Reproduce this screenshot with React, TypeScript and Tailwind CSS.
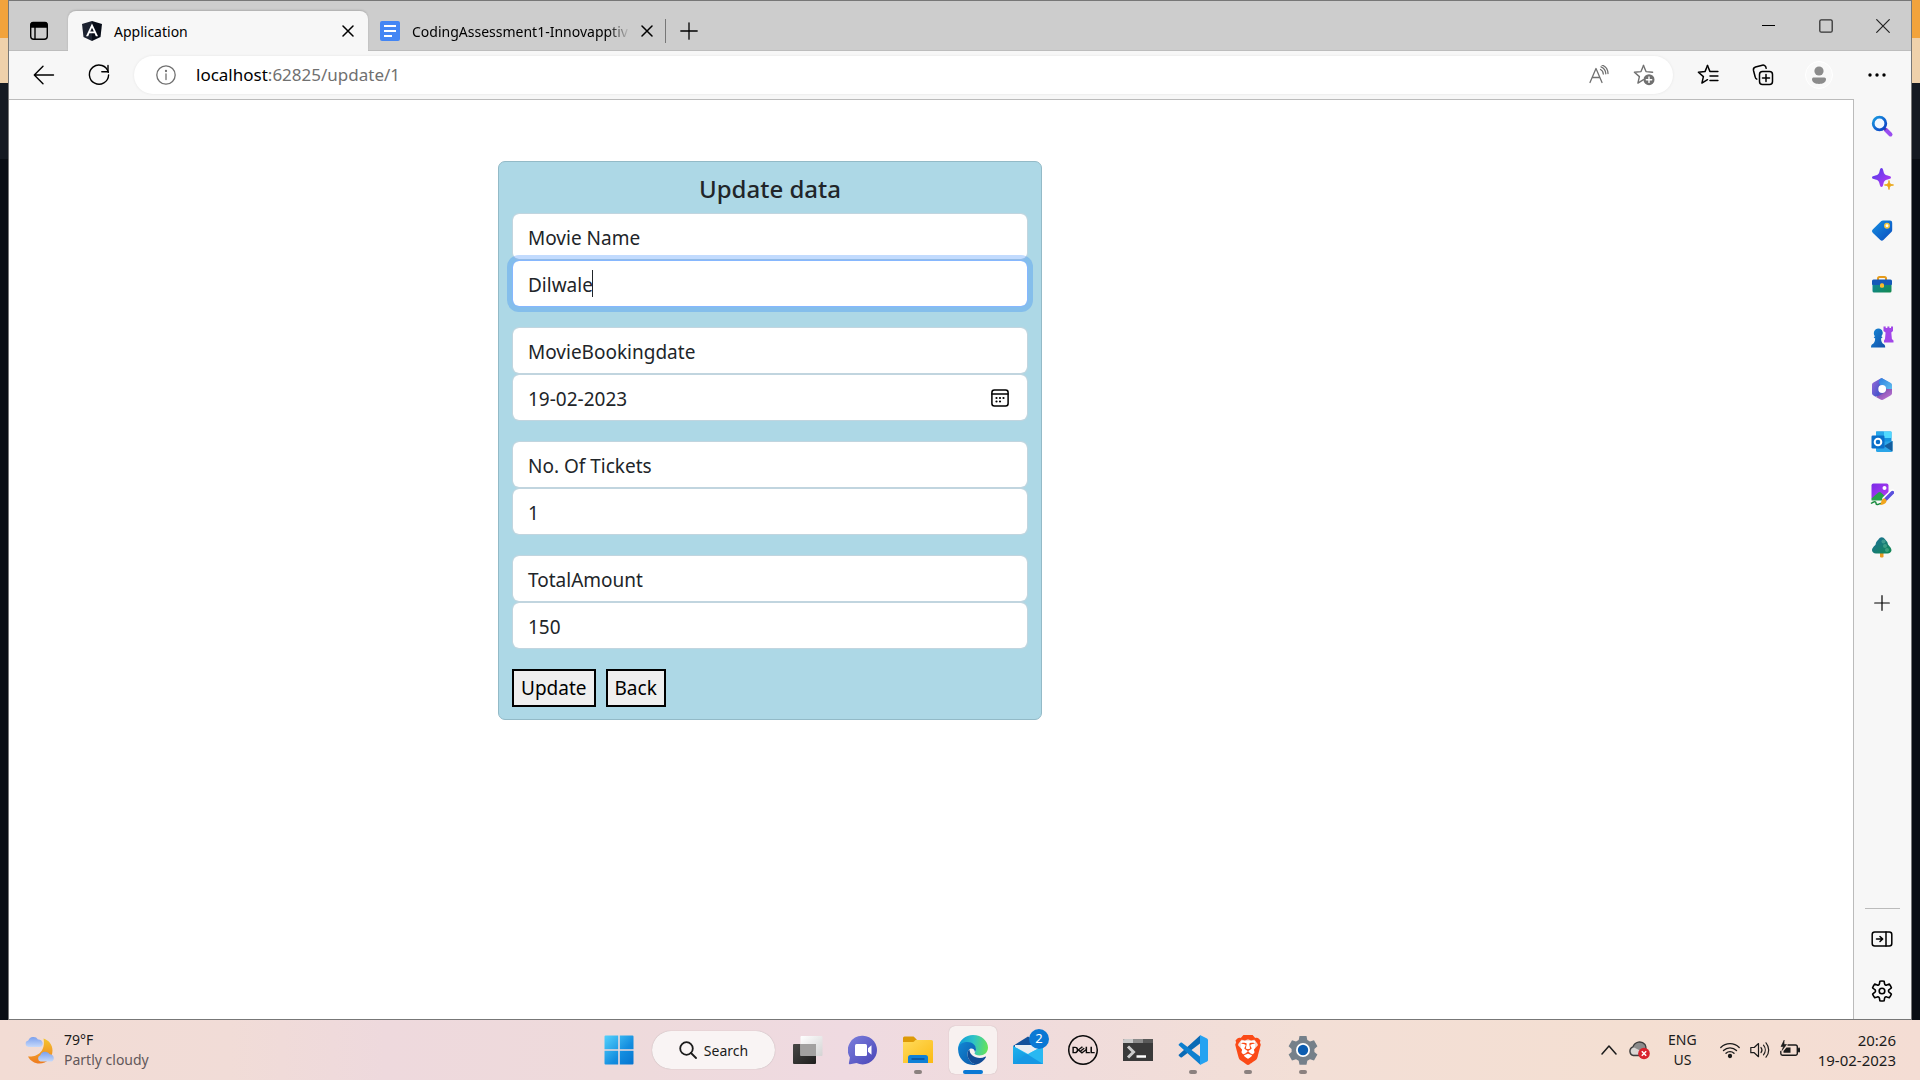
import type { ReactNode } from 'react';
import { SiDell, SiBrave } from 'react-icons/si';

/* ---------- Browser chrome icons ---------- */

const line = { fill: 'none', stroke: 'currentColor', strokeLinecap: 'round', strokeLinejoin: 'round' } as const;

const TabActionsIcon = () => (
  <svg viewBox="0 0 20 20" className="size-5" {...line} strokeWidth="1.4">
    <rect x="1.7" y="1.7" width="16.6" height="16.6" rx="3" />
    <path d="M2 3.5a2 2 0 0 1 2-2h12a2 2 0 0 1 2 2V6H2z" fill="currentColor" />
    <path d="M6 6v12" />
  </svg>
);

const AngularIcon = () => (
  <svg viewBox="0 0 20 20" className="size-5">
    <path d="M10 0 0 3l1.5 13L10 20z" fill="#1c2230" />
    <path d="m10 0 10 3-1.5 13L10 20z" fill="#070c17" />
    <path d="M10 2.5 4 15.2h2.2l1.2-2.9h5.2l1.2 2.9H16zm0 4.2 1.8 3.9H8.2z" fill="#fff" />
  </svg>
);

const DocsIcon = () => (
  <svg viewBox="0 0 20 20" className="size-5">
    <rect width="20" height="20" rx="2" fill="#4486f4" />
    <path d="M4 5h12M4 10h12M4 15h8" stroke="#fff" strokeWidth="2" />
  </svg>
);

const CloseIcon = () => (
  <svg viewBox="0 0 12 12" className="size-3" {...line} strokeWidth="1.5">
    <path d="m1 1 10 10M11 1 1 11" />
  </svg>
);

const PlusIcon = () => (
  <svg viewBox="0 0 18 18" className="size-[18px]" {...line} strokeWidth="1.3">
    <path d="M9 .8v16.4M.8 9h16.4" />
  </svg>
);

const BackIcon = () => (
  <svg viewBox="0 0 22 22" className="size-[22px]" {...line} strokeWidth="1.4">
    <path d="M20.5 11h-19M10 2.2 1.3 11l8.700 8.800" />
  </svg>
);

const RefreshIcon = () => (
  <svg viewBox="0 0 22 22" className="size-[22px]" {...line} strokeWidth="1.4">
    <path d="M20.3 8.200A9.600 9.600 0 1 0 20.600 11" />
    <path d="M20 1.500v6.300h-6.200" />
  </svg>
);

const InfoIcon = () => (
  <svg viewBox="0 0 20 20" className="size-5" {...line} strokeWidth="1.3">
    <circle cx="10" cy="10" r="9.200" />
    <path d="M10 9v5.500" />
    <circle cx="10" cy="6" r=".5" fill="currentColor" />
  </svg>
);

const ReadAloudIcon = () => (
  <svg viewBox="0 0 20 20" className="size-5" {...line} strokeWidth="1.3">
    <path d="m1 17.500 6-14 6 14M3.200 12.500h7.600" />
    <path d="M11.500 4.500c1.700.9 2.700 2.500 2.800 4.500M12 1.800c3 1.200 4.700 3.600 4.800 7M12.800 0c3.800 1.200 6 4.300 6.200 8.500" />
  </svg>
);

const STAR = 'M10.500 1.500 8 7.600l-6.600.6 5 4.400-1.500 6.500 5.600-3.400';

const AddFavoriteIcon = () => (
  <svg viewBox="0 0 22 22" className="size-[22px]" {...line} strokeWidth="1.400">
    <path d={STAR} />
    <path d="M10.500 1.500 13 7.600l6.600.6" />
    <circle cx="16" cy="15.700" r="5.500" fill="currentColor" stroke="none" />
    <path d="M16 13v5.400M13.300 15.700h5.400" stroke="#fff" />
  </svg>
);

const FavoritesIcon = () => (
  <svg viewBox="0 0 22 22" className="size-[22px]" {...line} strokeWidth="1.500">
    <path d={STAR} />
    <path d="m10.500 1.500 2.400 5.900h8M13 12h7.900M13 16.600h7.900" />
  </svg>
);

const CollectionsIcon = () => (
  <svg viewBox="0 0 22 22" className="size-[22px]" {...line} strokeWidth="1.500">
    <rect x="7.500" y="7.500" width="13" height="13" rx="3" />
    <path d="M14 10.500v7M10.500 14h7" />
    <path d="M4.800 15.200A3 3 0 0 1 3.200 13L1.500 6.500a3 3 0 0 1 2-3.500L10.300 1.200a3 3 0 0 1 3.700 2.300l.2.800" />
  </svg>
);

const ProfileIcon = () => (
  <svg viewBox="0 0 28 28" className="size-7">
    <circle cx="14" cy="14" r="13.500" fill="#f9f9f9" stroke="#fff" />
    <circle cx="14" cy="10" r="4.600" fill="#8c8c8c" />
    <path d="M7 18.200c0-1 .8-1.700 1.700-1.700h10.600c1 0 1.700.8 1.700 1.700 0 3-3 4.700-7 4.700s-7-1.700-7-4.700z" fill="#8c8c8c" />
  </svg>
);

const MoreIcon = () => (
  <svg viewBox="0 0 18 4" className="h-1 w-[18px]" fill="currentColor">
    <circle cx="2" cy="2" r="1.700" /><circle cx="9" cy="2" r="1.700" /><circle cx="16" cy="2" r="1.700" />
  </svg>
);

/* ---------- Sidebar icons ---------- */

const Gradient = ({ id, from, to }: { id: string; from: string; to: string }) => (
  <linearGradient id={id} x1="0" y1="0" x2="1" y2="1">
    <stop offset="0" stopColor={from} />
    <stop offset="1" stopColor={to} />
  </linearGradient>
);

const Side = ({ children }: { children: ReactNode }) => (
  <svg viewBox="0 0 24 24" className="size-6">{children}</svg>
);

const SideSearch = () => (
  <Side>
    <Gradient id="ss" from="#1a9be0" to="#0b3bc4" />
    <path d="m15.500 15.500 5 5" stroke="#9a4df0" strokeWidth="4" strokeLinecap="round" />
    <path d="m13.800 13.800 2 2" stroke="#5b3a9a" strokeWidth="2.500" />
    <circle cx="9.500" cy="9.500" r="6.300" fill="#f2f8ff" stroke="url(#ss)" strokeWidth="2.800" />
  </Side>
);
const SideDiscover = () => (
  <Side>
    <Gradient id="sd" from="#4a3be8" to="#c23bf5" />
    <path d="M11.500 1c1 0 1.500 1 1.900 3 .6 3 1.300 3.800 4.300 4.500 2 .5 3.300 1 3.300 2s-1.300 1.500-3.300 2c-3 .7-3.700 1.500-4.300 4.500-.4 2-.9 3-1.900 3s-1.500-1-1.900-3c-.6-3-1.300-3.800-4.300-4.500-2-.5-3.300-1-3.300-2s1.300-1.500 3.300-2C8.300 7.800 9 7 9.600 4c.4-2 .9-3 1.900-3z" fill="url(#sd)" />
    <path d="M19 13.500c.6 3.500 1 4 4.500 4.500-3.500.6-4 1-4.500 4.500-.6-3.500-1-4-4.500-4.500 3.500-.6 4-1 4.500-4.500z" fill="#eaa613" stroke="#eaa613" />
  </Side>
);
const SideShopping = () => (
  <Side>
    <Gradient id="sh" from="#1790e0" to="#0a4cc0" />
    <path d="M13 1.500h7a2.200 2.200 0 0 1 2.200 2.200v7.500a2.500 2.500 0 0 1-.8 1.700l-8 8.200a2.200 2.200 0 0 1-3.100 0l-7.600-7.300a2.200 2.200 0 0 1 0-3.200l8.600-8.500a2.500 2.500 0 0 1 1.700-.6z" fill="url(#sh)" />
    <circle cx="17" cy="6.700" r="2.200" fill="#fff" stroke="#f5c63a" strokeWidth="1.500" />
  </Side>
);
const SideTools = () => (
  <Side>
    <Gradient id="st" from="#0c86a5" to="#158a4c" />
    <path d="M8 8V6.500A1.500 1.500 0 0 1 9.500 5h5A1.500 1.500 0 0 1 16 6.500V8" fill="none" stroke="#e69b1b" strokeWidth="2" />
    <path d="M2.500 10h19v9a1.500 1.500 0 0 1-1.500 1.500H4A1.500 1.500 0 0 1 2.500 19z" fill="url(#st)" />
    <path d="M3.500 7.500h17A1.500 1.500 0 0 1 22 9v3a1 1 0 0 1-1 1H3a1 1 0 0 1-1-1V9a1.500 1.500 0 0 1 1.500-1.500z" fill="#1459b8" />
    <rect x="10" y="11.300" width="4" height="4.400" rx="1.500" fill="#f7bb2c" />
  </Side>
);
const SideGames = () => (
  <Side>
    <Gradient id="sg" from="#1688d8" to="#1450a8" />
    <path d="M13.500 1.500h2.200V3h1.700V1.500h2V3H21V1.500h2V6l-1.700 1.500.6 6.500 1.600 1.500v2H14v-2l1-1.500.6-6.500-2.100-1.500z" fill="#a246e8" />
    <path d="M3.800 8a4.500 4.500 0 1 1 7.600 3.200l1.100 1.300-1.500 1c.2 3 1 4.500 2.500 5.500 1.200.7 1.700 1.500 1.700 3.500H1c0-2 .5-2.800 1.700-3.500 1.500-1 2.300-2.500 2.500-5.500l-1.500-1 1.200-1.300A4.500 4.500 0 0 1 3.800 8z" fill="url(#sg)" />
  </Side>
);
const SideOffice = () => (
  <Side>
    <Gradient id="so1" from="#a06bd8" to="#2c4ec9" />
    <Gradient id="so2" from="#2b7de0" to="#63c4f0" />
    <Gradient id="so3" from="#6c3fa0" to="#c77bdb" />
    <path d="M12 1.200 21.500 7v10L12 22.500 2.500 17V7z" fill="#5a55c4" />
    <path d="M11.500 1 3.500 5.600A3 3 0 0 0 2 8.200V16a3 3 0 0 0 1.500 2.500l2 1.200L9 17.500l-.5-9z" fill="url(#so1)" />
    <path d="m11.500 1 8.500 4.600A3 3 0 0 1 22 8.200V14l-6-2.500-6.500-4.200C8.500 5 9 2.500 11.500 1z" fill="url(#so2)" />
    <path d="M22 12v4a3 3 0 0 1-1.500 2.500l-7 4a3 3 0 0 1-3 0l-5-2.800c2 .2 4-1.200 4-1.200l6.500-3.800V12z" fill="url(#so3)" />
    <circle cx="12.200" cy="12" r="3.900" fill="#fff" />
  </Side>
);
const SideOutlook = () => (
  <Side>
    <path d="M7 1.500h13.500a1 1 0 0 1 1 1V13H6V2.500a1 1 0 0 1 1-1z" fill="#1594e0" />
    <path d="M13.700 1.500h7.800V8h-7.800z" fill="#50d9ff" />
    <path d="M6 1.500h7.700V8H6z" fill="#28a8ea" />
    <path d="M6 12.500 22.500 11v9.500a1.500 1.500 0 0 1-1.500 1.500H7.500A1.500 1.500 0 0 1 6 20.500z" fill="#2aa5e8" />
    <path d="m14 16 8.500-5v10.500z" fill="#155e9e" />
    <rect x="1.500" y="5.500" width="13" height="13" rx="1.300" fill="#0a6fc9" />
    <circle cx="8" cy="12" r="3.300" fill="none" stroke="#fff" strokeWidth="2" />
  </Side>
);
const SideImage = () => (
  <Side>
    <Gradient id="si" from="#7a2be8" to="#b83df0" />
    <rect x="1.500" y="1.500" width="17" height="16.500" rx="2" fill="url(#si)" />
    <circle cx="14.500" cy="6" r="2" fill="#fff" />
    <path d="m1.500 16.500 6.800-6a2 2 0 0 1 2.600 0l5.600 5-2.500 3H1.500z" fill="#25a34a" />
    <path d="M1 21.500c2-1.500 3.500-2.500 4.500-1.500s0 3 2 2.500 2.500-1.500 4-1" fill="none" stroke="#168a3c" strokeWidth="1.500" />
    <path d="m22.500 10-7.500 7" stroke="#fff" strokeWidth="5.500" strokeLinecap="round" />
    <path d="M22.500 10.500 16 17" stroke="#5a50dd" strokeWidth="3.500" strokeLinecap="round" />
    <path d="M13.500 16.500c1.700-.5 3.500 1.200 3 3-.6 2.300-3.500 3.500-6.500 3.500 1.700-2.200 1-5.500 3.500-6.500z" fill="#f1a51d" />
  </Side>
);
const SideTree = () => (
  <Side>
    <Gradient id="sr" from="#1b6e9c" to="#138a50" />
    <rect x="10" y="16" width="3.500" height="6.500" rx="1.200" fill="#eb9b20" />
    <path d="M8.700 4a3.500 3.500 0 0 1 6.100 0c.4.800 1.600 1.700 2.300 2.800.7 1 .6 2 .9 2.600s3.700 3.300 3.500 5.900c-.2 2-1.700 3.200-4 3.200H6c-2.300 0-3.900-1.300-4-3.200-.2-2.600 3.200-5 3.600-5.900.3-.7.2-1.700.9-2.600C7.200 5.900 8.300 4.800 8.700 4z" fill="url(#sr)" />
    <g fill="#6ec4a5" opacity=".45"><circle cx="13.500" cy="6.500" r="2" /><circle cx="15" cy="11" r="2" /><circle cx="17" cy="15" r="2" /></g>
  </Side>
);
const HideSidebarIcon = () => (
  <svg viewBox="0 0 22 22" className="size-[22px]" {...line} strokeWidth="1.500">
    <rect x="1.200" y="4" width="19.600" height="14" rx="2.500" />
    <path d="M15 4v14M5.500 11h6M9 8.500l2.700 2.500L9 13.500" />
  </svg>
);
const GearIcon = () => (
  <svg viewBox="0 0 24 24" className="size-6" {...line} strokeWidth="1.600">
    <circle cx="12" cy="12" r="2.800" />
    <path d="M9.900 2.200a10 10 0 0 1 4.200 0l.5 2.600a1.600 1.600 0 0 0 2.200 1.200l2.500-.9a10 10 0 0 1 2.100 3.700l-2 1.700a1.600 1.600 0 0 0 0 2.900l2 1.700a10 10 0 0 1-2.100 3.700l-2.500-.9a1.600 1.600 0 0 0-2.200 1.200l-.5 2.700a10 10 0 0 1-4.200 0l-.5-2.700A1.600 1.600 0 0 0 7.200 18l-2.500.8a10 10 0 0 1-2.100-3.700l2-1.700a1.600 1.600 0 0 0 0-2.900l-2-1.700a10 10 0 0 1 2.100-3.700l2.500.9a1.600 1.600 0 0 0 2.200-1.200z" />
  </svg>
);

/* ---------- Taskbar icons ---------- */

const Task = ({ children }: { children: ReactNode }) => (
  <svg viewBox="0 0 30 30" className="size-[30px]">{children}</svg>
);

const StartIcon = () => (
  <Task>
    <linearGradient id="win" gradientUnits="userSpaceOnUse" x1="0" y1="0" x2="30" y2="30">
      <stop offset="0" stopColor="#55d3fd" /><stop offset=".6" stopColor="#138ddf" /><stop offset="1" stopColor="#0573cf" />
    </linearGradient>
    <path d="M1.500.5h12.700v13.700H.5V1.500a1 1 0 0 1 1-1zm14.300 0h12.700a1 1 0 0 1 1 1v12.700H15.800zM.5 15.800h13.700v13.700H1.500a1 1 0 0 1-1-1zm15.300 0h13.700v12.700a1 1 0 0 1-1 1H15.800z" fill="url(#win)" />
  </Task>
);
const TaskViewIcon = () => (
  <Task>
    <Gradient id="tv" from="#484846" to="#1f1f1e" />
    <Gradient id="tv2" from="#ffffff" to="#d3d3d3" />
    <rect x="0" y="9" width="23" height="20" rx="1" fill="url(#tv)" />
    <rect x="7.500" y="1" width="22" height="20" rx="1" fill="url(#tv2)" />
    <path d="M7.500 9H23v12H7.500z" fill="#a2a1a0" />
  </Task>
);
const ChatIcon = () => (
  <Task>
    <Gradient id="ch" from="#7b7fdc" to="#4a45b8" />
    <path d="M15 .8A14.300 14.300 0 1 1 8.500 28L2 29.200c-.8.100-1.300-.6-1.100-1.300l1-5.500A14.300 14.300 0 0 1 15 .8z" fill="url(#ch)" />
    <rect x="7" y="9" width="12" height="12" rx="1.500" fill="#fff" />
    <path d="m20 13.300 3.500-3v9.400l-3.500-3z" fill="#fff" />
  </Task>
);
const ExplorerIcon = () => (
  <Task>
    <Gradient id="ex" from="#ffdb5c" to="#fbba13" />
    <path d="M0 3a1.500 1.500 0 0 1 1.500-1.500h8.200c1 0 1.500.5 2 1L14 5v6H0z" fill="#dd9a07" />
    <path d="M0 7h9.500c1 0 1.500-.4 2-1l1-1h16A1.500 1.500 0 0 1 30 6.500V28H0z" fill="url(#ex)" />
    <path d="M5 28v-5.500A2.500 2.500 0 0 1 7.500 20h15a2.500 2.500 0 0 1 2.500 2.500V28z" fill="#1080d6" />
    <path d="M8.500 24h13" stroke="#0b4f96" strokeWidth="1.500" />
  </Task>
);
const EdgeIcon = () => (
  <Task>
    <linearGradient id="ed1" x1="0" y1=".4" x2="1" y2=".5"><stop offset="0" stopColor="#0e9bdc" /><stop offset=".5" stopColor="#2fc3c6" /><stop offset="1" stopColor="#66e358" /></linearGradient>
    <Gradient id="ed2" from="#1287d4" to="#0b57a8" />
    <path d="M.3 12C1.500 5 7.500 0 15 0c9 0 15 6.500 15 12.500 0 5-3.800 8-8.500 8-3 0-5-1-5-2.200 0-.8 1.500-1.500 1.500-3.500 0-2.500-2-4.500-5-4.500-5 0-9 5-9 9C2 18 0 15 .3 12z" fill="url(#ed1)" />
    <path d="M.2 13C1.500 8.500 5.500 7 9.500 7c5 0 8.500 3.300 8.500 7.300 0 1.500-.6 2.400-1 2.900-.4-2.600-2-3.700-3.500-3.700-2.500 0-4 2.500-4 5.500 0 5.500 4.500 10 9 10.400-1 .4-2.300.6-3.500.6C6 30-.7 22 .2 13z" fill="url(#ed2)" />
    <path d="M11.500 14.500c-1.500 1-2 2.700-2 4.500 0 5.500 4.500 10 9 10.400 4-1 7.500-4 9.300-7 .3-.6-.3-1-.8-.7-1.500.8-3.200 1.200-5 1.200-6 0-10.500-3.500-10.500-8.400z" fill="#124c96" />
  </Task>
);
const MailIcon = () => (
  <Task>
    <Gradient id="ml" from="#20b4ee" to="#0a84d8" />
    <path d="M0 11 15 1.500 30 11v9H0z" fill="#13529b" />
    <path d="M2 10h26v6l-13 6L2 16z" fill="#e9edf2" />
    <path d="m0 11 15 8 15-8v18H0z" fill="#2cc0f5" />
    <path d="m0 11 30 18H0z" fill="url(#ml)" />
    <path d="m0 29 18-11.500L30 11v18z" fill="#29b8f2" />
    <path d="m14 19 16 10H0z" fill="#1698e4" />
  </Task>
);
const TerminalIcon = () => (
  <Task>
    <path d="M1.500 4H30v22H0V5.500A1.500 1.500 0 0 1 1.500 4z" fill="#3a3a3a" />
    <path d="M1.500 4H10v4H0V5.500A1.500 1.500 0 0 1 1.500 4z" fill="#c9c9c9" />
    <path d="M10 4h10v4H10z" fill="#8b8b8b" /><path d="M20 4h10v4H20z" fill="#595959" />
    <path d="m5 11.500 5.500 5.500L5 22.500" fill="none" stroke="#ccc" strokeWidth="3" />
    <path d="M13.500 21.500H23" stroke="#fff" strokeWidth="2.500" />
  </Task>
);
const CodeIcon = () => (
  <Task>
    <path d="M22 .5 1 19.500c-.5.400-.5 1 0 1.500l1.500 1.300c.5.400 1 .4 1.500 0L22 8.500z" fill="#0a6ab5" />
    <path d="M22 29.500 1 10.500c-.5-.400-.5-1 0-1.500l1.500-1.300c.5-.4 1-.4 1.500 0L22 21.500z" fill="#0d7fcf" />
    <path d="M22 0 29 3.400c.6.300 1 .9 1 1.600v20c0 .7-.4 1.300-1 1.600L22 30z" fill="#26a3f1" />
  </Task>
);
const SettingsIcon = () => (
  <Task>
    <path d="M11.500 1h7l.8 4 2.700 1.500 4-1.300 3.400 6-3 2.700v3l3 2.700-3.400 6-4-1.300-2.700 1.500-.8 4h-7l-.8-4L8 24.300l-4 1.300-3.400-6 3-2.700v-3l-3-2.700 3.400-6L8 6.500 10.700 5z" fill="#75808a" />
    <circle cx="15" cy="15" r="7" fill="#fff" />
    <circle cx="15" cy="15" r="5.200" fill="#0b5cb0" />
  </Task>
);
const WeatherIcon = () => (
  <svg viewBox="0 0 30 30" className="size-[30px]">
    <linearGradient id="mo" x1="0" y1="0" x2="0" y2="1"><stop offset="0" stopColor="#f4c52f" /><stop offset="1" stopColor="#ee7a1f" /></linearGradient>
    <linearGradient id="cl" x1="0" y1="0" x2="0" y2="1"><stop offset="0" stopColor="#7ba0ee" /><stop offset="1" stopColor="#c6d9fa" /></linearGradient>
    <path d="M18.500 3.500c5 1.500 9 6 9 12 0 7.500-5.500 13-13 13-5 0-9.300-2.700-11.500-7 9 1 18-5 15.500-18z" fill="url(#mo)" />
    <path d="M3.500 12A3.300 3.300 0 0 1 3.300 5.500 5.500 5.500 0 0 1 13 4.500a4 4 0 0 1 2.500 7.500z" fill="url(#cl)" />
    <path d="M15.500 26.500a3.300 3.300 0 0 1-.2-6.300 5.300 5.300 0 0 1 9.500-1 4 4 0 0 1 2.200 7.300z" fill="url(#cl)" />
  </svg>
);

/* ---------- Tray icons ---------- */

const ChevronUp = () => (
  <svg viewBox="0 0 16 16" className="size-4" {...line} strokeWidth="1.500"><path d="m1 12 7-8 7 8" /></svg>
);
const CloudErrorIcon = () => (
  <svg viewBox="0 0 22 20" className="h-5 w-[22px]">
    <path d="M4.500 15.500A4.500 4.500 0 0 1 4 6.800 7 7 0 0 1 16 4.500c.8 1.300 1 3 1 4l-7 7z" fill="#8b8b8b" stroke="#3c3c3c" strokeWidth="1.300" />
    <path d="M4 14.500c-3-1-3-6.500 1-7l6 3-2 4z" fill="#d9d6d3" />
    <circle cx="15" cy="13.500" r="5.800" fill="#d9232e" />
    <path d="m12.800 11.300 4.400 4.400m0-4.400-4.400 4.400" stroke="#fff" strokeWidth="1.500" />
  </svg>
);
const WifiIcon = () => (
  <svg viewBox="0 0 20 20" className="size-5" {...line} strokeWidth="1.300">
    <path d="M.8 7.500a13 13 0 0 1 18.400 0M3.500 10.500a9.200 9.200 0 0 1 13 0M6 13.300a5.700 5.700 0 0 1 8 0" />
    <circle cx="10" cy="16" r="1.500" fill="currentColor" />
  </svg>
);
const SpeakerIcon = () => (
  <svg viewBox="0 0 20 20" className="size-5" {...line} strokeWidth="1.200">
    <path d="M.8 7.500v5.200h3.400l4.300 4V3.500l-4.300 4z" />
    <path d="M11 7.500a4 4 0 0 1 0 5M13.500 5.200a7.500 7.500 0 0 1 0 9.600M16 2.800a11 11 0 0 1 0 14.400" />
  </svg>
);
const BatteryIcon = () => (
  <svg viewBox="0 0 20 20" className="size-5" {...line} strokeWidth="1.400">
    <path d="M8 5h7.500A1.800 1.800 0 0 1 17.300 6.800v6.700a1.800 1.800 0 0 1-1.800 1.800h-13A1.800 1.800 0 0 1 .8 13.500v-2" />
    <path d="M6.500 7.500h4v5.300h-7V11z" fill="currentColor" stroke="none" />
    <path d="M19 8.500v3" strokeWidth="2" />
    <path d="M4 .5 1 6.500h2.500L2 10.500l4.500-6H4.200z" fill="currentColor" strokeWidth=".6" />
  </svg>
);
const CalendarIcon = () => (
  <svg viewBox="0 0 18 18" className="size-[18px]" {...line} strokeWidth="1.500">
    <rect x=".9" y=".9" width="16.200" height="16.200" rx="2.500" />
    <path d="M1 5h16" />
    <g fill="currentColor" stroke="none">
      <circle cx="5.500" cy="9" r="1.100" /><circle cx="9" cy="9" r="1.100" /><circle cx="12.500" cy="9" r="1.100" />
      <circle cx="5.500" cy="12.500" r="1.100" /><circle cx="9" cy="12.500" r="1.100" />
    </g>
  </svg>
);

/* ---------- Browser window ---------- */

const IconButton = ({ label, className = '', children }: { label: string; className?: string; children: ReactNode }) => (
  <button type="button" aria-label={label} className={`flex shrink-0 items-center justify-center ${className}`}>{children}</button>
);

const TabStrip = () => (
  <header className="flex h-[50px] shrink-0 items-end bg-[#cdcdcd] pb-px shadow-[inset_0_-1px_0_#bdbdbd]">
    <IconButton label="Tab actions" className="h-[38px] w-[59px]"><TabActionsIcon /></IconButton>
    <div className="-mb-px flex h-10 w-[300px] items-center rounded-t-lg bg-[#f7f7f7] px-[14px] shadow-[0_-1px_2px_rgba(0,0,0,0.15)]">
      <AngularIcon />
      <span className="ml-3 flex-1 text-[14px]">Application</span>
      <IconButton label="Close tab"><CloseIcon /></IconButton>
    </div>
    <div className="flex h-[38px] w-[299px] items-center pl-3">
      <DocsIcon />
      <span className="ml-3 w-[218px] whitespace-nowrap text-[14px] [mask-image:linear-gradient(to_right,black_90%,transparent)]">CodingAssessment1-Innovapptiv</span>
      <IconButton label="Close tab" className="ml-[11px]"><CloseIcon /></IconButton>
      <span className="ml-3 h-6 w-px bg-[#777]" />
    </div>
    <IconButton label="New tab" className="h-[38px] w-[43px]"><PlusIcon /></IconButton>
    <div className="ml-auto flex h-full">
      <IconButton label="Minimize" className="w-[58px]"><span className="h-px w-[13px] bg-black" /></IconButton>
      <IconButton label="Maximize" className="w-[58px]"><svg viewBox="0 0 14 14" className="size-[14px]" fill="none" stroke="#333"><rect x=".8" y=".8" width="12.400" height="12.400" rx="1.500" strokeWidth="1.300" /></svg></IconButton>
      <IconButton label="Close window" className="w-14 text-[#222]"><svg viewBox="0 0 14 14" className="size-[14px]" {...line} strokeWidth="1.200"><path d="m.7.7 12.600 12.600m0-12.600L.7 13.300" /></svg></IconButton>
    </div>
  </header>
);

const Toolbar = () => (
  <nav className="flex h-12 shrink-0 items-center bg-[#f7f7f7] text-black">
    <IconButton label="Back" className="ml-[7px] w-[55px]"><BackIcon /></IconButton>
    <IconButton label="Refresh" className="w-[55px]"><RefreshIcon /></IconButton>
    <div className="ml-2 flex h-[38px] flex-1 items-center rounded-full bg-white pr-[18px] pl-[22px] text-[#707070] shadow-[0_0_3px_rgba(0,0,0,0.08)]">
      <InfoIcon />
      <div className="ml-5 flex-1 text-[17px]"><span className="text-black">localhost</span>:62825/update/1</div>
      <IconButton label="Read aloud"><ReadAloudIcon /></IconButton>
      <IconButton label="Add to favorites" className="ml-6"><AddFavoriteIcon /></IconButton>
    </div>
    <IconButton label="Favorites" className="ml-[7px] w-[55px]"><FavoritesIcon /></IconButton>
    <IconButton label="Collections" className="w-[55px]"><CollectionsIcon /></IconButton>
    <IconButton label="Profile" className="w-[58px]"><ProfileIcon /></IconButton>
    <IconButton label="More" className="mr-[5px] w-[58px]"><MoreIcon /></IconButton>
  </nav>
);

const sideItems = [
  { label: 'Search', Icon: SideSearch },
  { label: 'Discover', Icon: SideDiscover },
  { label: 'Shopping', Icon: SideShopping },
  { label: 'Tools', Icon: SideTools },
  { label: 'Games', Icon: SideGames },
  { label: 'Microsoft 365', Icon: SideOffice },
  { label: 'Outlook', Icon: SideOutlook },
  { label: 'Image Creator', Icon: SideImage },
  { label: 'E-tree', Icon: SideTree },
];

const Sidebar = () => (
  <aside className="flex w-[57px] shrink-0 flex-col items-center bg-[#f7f7f7] pt-[7px] pr-px pb-2">
    <div className="flex h-[461px] flex-col justify-between">
      {sideItems.map(({ label, Icon }) => (
        <IconButton key={label} label={label} className="size-10"><Icon /></IconButton>
      ))}
    </div>
    <IconButton label="Add" className="mt-4 size-10"><svg viewBox="0 0 16 16" className="size-4" {...line} strokeWidth="1.200"><path d="M8 .7v14.600M.7 8h14.600" /></svg></IconButton>
    <span className="mt-auto h-px w-[35px] bg-[#bbb]" />
    <IconButton label="Hide sidebar" className="mt-[10px] size-10"><HideSidebarIcon /></IconButton>
    <IconButton label="Settings" className="mt-3 size-10"><GearIcon /></IconButton>
  </aside>
);

/* ---------- Form ---------- */

const CONTROL = 'block h-[47px] w-full rounded-[7px] border border-[#ced4da]/60 bg-white bg-clip-padding px-[15px] pt-0.5 text-[19px] leading-[45px] text-[#212529] outline-none';

type FieldProps = { id: string; label: string; value: string; focused?: boolean; date?: boolean };

const Field = ({ id, label, value, focused, date }: FieldProps) => (
  <div>
    <label htmlFor={id} className={CONTROL}>{label}</label>
    <div className="relative">
      <input id={id} defaultValue={value} className={focused ? `${CONTROL} border-[#86b7fe]! shadow-[0_0_0_5px_rgba(13,110,253,0.25)]` : CONTROL} />
      {focused && <span className="absolute top-[10px] left-20 h-[27px] w-px bg-[#212529]" />}
      {date && (
        <button type="button" aria-label="Open calendar" className="absolute top-[15px] right-[19px] text-black"><CalendarIcon /></button>
      )}
    </div>
  </div>
);

const BUTTON = 'h-[38px] border-2 border-black bg-[#efefef] px-[7px] text-[19px] leading-none text-black';

const UpdateForm = () => (
  <form className="ml-[489px] mt-[61px] w-[544px] rounded-[7px] border border-[#93bac7] bg-[#add8e6] px-[13px] py-3" onSubmit={(e) => e.preventDefault()}>
    <h1 className="mb-[9px] text-center text-[24px] leading-[30px] font-medium text-[#212529]">Update data</h1>
    <div className="flex flex-col gap-5">
      <Field id="movie" label="Movie Name" value="Dilwale" focused />
      <Field id="date" label="MovieBookingdate" value="19-02-2023" date />
      <Field id="tickets" label="No. Of Tickets" value="1" />
      <Field id="amount" label="TotalAmount" value="150" />
      <div className="flex gap-[10px]">
        <button type="submit" className={BUTTON}>Update</button>
        <button type="button" className={BUTTON}>Back</button>
      </div>
    </div>
  </form>
);

/* ---------- Taskbar ---------- */

const TaskButton = ({ label, active, running, children }: { label: string; active?: boolean; running?: boolean; children: ReactNode }) => (
  <button type="button" aria-label={label} className={active ? 'relative flex size-12 items-center justify-center rounded-md bg-[#f8f1f0] shadow-[0_0_1px_rgba(0,0,0,0.25)]' : 'relative flex size-12 items-center justify-center'}>
    {children}
    {active && <span className="absolute bottom-0 h-1 w-5 rounded-full bg-[#0a78d4]" />}
    {running && <span className="absolute bottom-0 h-1 w-2 rounded-full bg-[#8b817f]" />}
  </button>
);

const Taskbar = () => (
  <footer className="grid h-[60px] shrink-0 grid-cols-[1fr_auto_1fr] items-center bg-[linear-gradient(90deg,#f2dcd4_0%,#f1dcd7_12%,#eed9dd_20%,#eedadb_32%,#efdae1_44%,#f0dcdb_56%,#f3dfd6_68%,#f4dfd2_85%,#f4ddd4_100%)] pl-0.5">
    <button type="button" className="flex items-center gap-[9px] pl-[23px] text-left text-[14px] leading-5">
      <WeatherIcon />
      <span><span className="block text-[#1b1b1b]">79°F</span><span className="block text-[#62585a]">Partly cloudy</span></span>
    </button>
    <div className="flex items-center gap-[7px]">
      <TaskButton label="Start"><StartIcon /></TaskButton>
      <button type="button" className="mx-0.5 flex h-[38px] w-[123px] items-center justify-center gap-[7px] rounded-full bg-[#f9f4f4] text-[14px] text-[#1b1b1b] shadow-[0_0_1px_rgba(0,0,0,0.3)]">
        <svg viewBox="0 0 18 18" className="size-[18px]" {...line} strokeWidth="1.800"><circle cx="7.500" cy="7.500" r="6.300" /><path d="m12 12 5 5" /></svg>
        Search
      </button>
      <TaskButton label="Task view"><TaskViewIcon /></TaskButton>
      <TaskButton label="Chat"><ChatIcon /></TaskButton>
      <TaskButton label="File Explorer" running><ExplorerIcon /></TaskButton>
      <TaskButton label="Edge" active><EdgeIcon /></TaskButton>
      <TaskButton label="Mail">
        <MailIcon />
        <span className="absolute top-[3px] right-[3px] flex size-5 items-center justify-center rounded-full bg-[#0a78d4] text-[13px] text-white">2</span>
      </TaskButton>
      <TaskButton label="Dell"><SiDell size={30} color="#0b0b0b" /></TaskButton>
      <TaskButton label="Terminal"><TerminalIcon /></TaskButton>
      <TaskButton label="Visual Studio Code" running><CodeIcon /></TaskButton>
      <TaskButton label="Brave" running>
        <span className="relative flex"><span className="absolute inset-x-2 inset-y-1.5 bg-white" /><SiBrave size={30} color="#fb4a17" className="relative" /></span>
      </TaskButton>
      <TaskButton label="Settings" running><SettingsIcon /></TaskButton>
    </div>
    <div className="flex items-center justify-end pr-6 text-[14px] leading-5 text-[#1b1b1b]">
      <IconButton label="Show hidden icons"><ChevronUp /></IconButton>
      <span className="ml-3"><CloudErrorIcon /></span>
      <span className="ml-[17px] text-center">ENG<br />US</span>
      <span className="ml-[23px] flex gap-[10px]"><WifiIcon /><SpeakerIcon /><BatteryIcon /></span>
      <span className="ml-[18px] text-right text-[15px]">20:26<br />19-02-2023</span>
    </div>
  </footer>
);

export default function App() {
  return (
    <div className="flex h-screen flex-col overflow-hidden font-['Noto_Sans','Open_Sans',sans-serif] text-black">
      <div className="flex min-h-0 flex-1 bg-[linear-gradient(#f2a33c_38px,#efd1ab_38px,#efd1ab_83px,#151a22_83px,#151a22_159px,#0a0e14_159px)] px-2">
        <div className="flex min-w-0 flex-1 flex-col border border-[#777]">
          <TabStrip />
          <Toolbar />
          <div className="flex min-h-0 flex-1 bg-[#f7f7f7]">
            <main className="min-w-0 flex-1 border-t border-r border-[#bbb] bg-white"><UpdateForm /></main>
            <Sidebar />
          </div>
        </div>
      </div>
      <Taskbar />
    </div>
  );
}
